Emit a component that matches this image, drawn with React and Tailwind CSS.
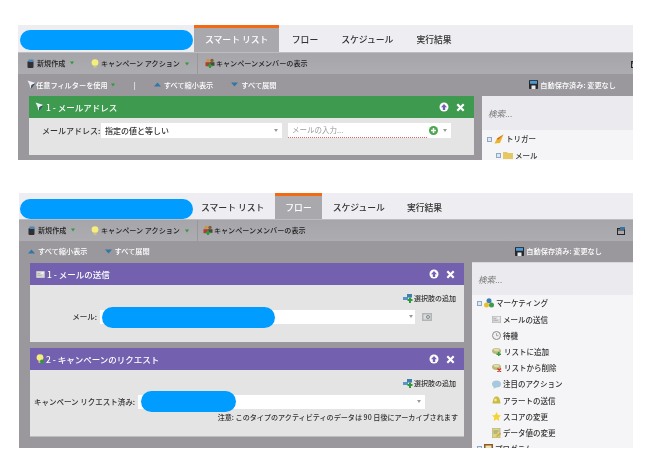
import React from 'react';

const font = { fontFamily: '"Noto Sans CJK JP", "Liberation Sans", sans-serif' };

// Small drawn icons
const NewIcon = () => (
  <svg width="7" height="9" viewBox="0 0 7 9" className="shrink-0">
    <rect x="0.5" y="2" width="6" height="7" rx="1" fill="#2f3033" />
    <rect x="1.5" y="0.5" width="5" height="2.5" fill="#4a86b8" />
  </svg>
);

const BulbIcon = ({ plus }) => (
  <svg width="8" height="10" viewBox="0 0 8 10" className="shrink-0">
    <circle cx="4" cy="3.6" r="3.4" fill="#f6ee7a" />
    <rect x="2.5" y="6.6" width="3" height="2.4" fill="#c4c08c" />
    {plus && <circle cx="6" cy="7.6" r="2" fill="#2e9a3c" />}
  </svg>
);

const MembersIcon = () => (
  <svg width="10" height="10" viewBox="0 0 10 10" className="shrink-0">
    <circle cx="3" cy="2.4" r="1.7" fill="#c9973c" />
    <circle cx="7" cy="2.4" r="1.7" fill="#8a5a2a" />
    <rect x="0.5" y="4.2" width="4.5" height="4" fill="#b8392e" />
    <rect x="5" y="4.2" width="4.5" height="3.6" fill="#4b4a3a" />
    <path d="M4 5.5h2v1.5h1.5v1.5H6V10H4V8.500H2.500V7H4z" fill="#2e9a3c" />
  </svg>
);

const FilterIcon = () => (
  <svg width="9" height="10" viewBox="0 0 9 10" className="shrink-0">
    <path d="M0.500 0.500 L8.500 3 L4.500 5 L3.500 9.500 L2.600 4.800 Z" fill="#f0f0f4" />
    <path d="M3.500 9.500 L4.500 5 L8.500 3 Z" fill="#33506b" />
  </svg>
);

const TriUp = () => (
  <svg width="7" height="5" viewBox="0 0 7 5" className="shrink-0">
    <path d="M3.500 0.500 L7 4.500 H0 Z" fill="#2f77a8" />
  </svg>
);

const TriDown = () => (
  <svg width="7" height="5" viewBox="0 0 7 5" className="shrink-0">
    <path d="M0 0.500 H7 L3.500 4.500 Z" fill="#2f77a8" />
  </svg>
);

const GreenArrow = () => (
  <svg width="4" height="4" viewBox="0 0 4 4" className="shrink-0">
    <path d="M0 0.500 H4 L2 3.500 Z" fill="#2e9a3c" />
  </svg>
);

const SelectArrow = () => (
  <svg width="4" height="3" viewBox="0 0 4 3" className="shrink-0">
    <path d="M0 0 H4 L2 3 Z" fill="#9a9a9a" />
  </svg>
);

const SaveIcon = () => (
  <svg width="9" height="9" viewBox="0 0 9 9" className="shrink-0">
    <rect width="9" height="9" rx="0.8" fill="#26282c" />
    <rect x="1" y="0.800" width="7" height="3" fill="#4d9ad0" />
    <rect x="2.500" y="5.500" width="4" height="3.500" fill="#e8e8e8" />
  </svg>
);

const PrintIcon = () => (
  <svg width="8" height="8" viewBox="0 0 8 8" className="shrink-0">
    <rect x="0.500" y="1.500" width="7" height="6" fill="none" stroke="#26282c" />
    <rect x="0" y="2.500" width="8" height="1" fill="#26282c" />
    <rect x="3" y="0" width="5" height="2.500" fill="#2f77a8" />
  </svg>
);

const UpCircle = () => (
  <svg width="10" height="10" viewBox="0 0 10 10" className="shrink-0">
    <circle cx="5" cy="5" r="4.500" fill="#fff" />
    <path d="M5 2 L8 5.200 H6.200 V8 H3.800 V5.200 H2 Z" fill="currentColor" />
  </svg>
);

const CloseX = () => (
  <svg width="9" height="9" viewBox="0 0 9 9" className="shrink-0">
    <path d="M1.300 1.300 L7.700 7.700 M7.700 1.300 L1.300 7.700" stroke="#fff" strokeWidth="2.200" />
  </svg>
);

const PlusCircle = () => (
  <svg width="9" height="9" viewBox="0 0 9 9" className="shrink-0">
    <circle cx="4.500" cy="4.500" r="4.500" fill="#4aa84f" />
    <path d="M4.500 2 V7 M2 4.500 H7" stroke="#fff" strokeWidth="1.500" />
  </svg>
);

const AddChoiceIcon = () => (
  <svg width="10" height="9" viewBox="0 0 10 9" className="shrink-0">
    <rect x="0" y="3" width="5" height="3" fill="#5a94c4" />
    <rect x="4" y="0" width="5" height="3.500" fill="#3f7fb3" />
    <path d="M6 3.500h2v1.500h1.500v2H8V9H6V7H4.500V5H6z" fill="#2e9a3c" />
  </svg>
);

const MailIcon = () => (
  <svg width="9" height="7" viewBox="0 0 10 8" className="shrink-0">
    <rect width="10" height="8" fill="#d8d8d8" stroke="#9a9a9a" strokeWidth="0.600" />
    <rect x="6" y="1.200" width="2.600" height="2" fill="#f4f4f4" />
    <path d="M1.500 3h3M1.500 5h5" stroke="#9a9a9a" strokeWidth="0.700" />
  </svg>
);

const PickIcon = () => (
  <svg width="10" height="8" viewBox="0 0 10 8" className="shrink-0">
    <rect width="10" height="8" fill="#b4b4b6" />
    <rect x="1.500" y="1.500" width="7" height="5" fill="#dcdcde" />
    <circle cx="6" cy="4" r="1.500" fill="none" stroke="#6f8f86" />
  </svg>
);

const ClockIcon = () => (
  <svg width="9" height="9" viewBox="0 0 9 9" className="shrink-0">
    <circle cx="4.500" cy="4.500" r="4" fill="#f0f0f0" stroke="#8a8a8a" />
    <path d="M4.500 2.200 V4.700 H6.500" stroke="#8a8a8a" strokeWidth="0.700" fill="none" />
  </svg>
);

const ListIcon = ({ remove }) => (
  <svg width="10" height="9" viewBox="0 0 10 9" className="shrink-0">
    <ellipse cx="4.500" cy="4" rx="4.500" ry="3" fill="#b9b878" />
    <ellipse cx="4.500" cy="3" rx="3" ry="1.400" fill="#dedcae" />
    {remove
      ? <path d="M5.500 5.500 L9 9 M9 5.500 L5.500 9" stroke="#d32f20" strokeWidth="1.300" />
      : <path d="M6 5h1.500v1.500H9V8H7.500v1H6V8H4.500V6.500H6z" fill="#2e9a3c" />}
  </svg>
);

const BubbleIcon = () => (
  <svg width="9" height="9" viewBox="0 0 9 9" className="shrink-0">
    <ellipse cx="4.500" cy="4" rx="4.500" ry="3.500" fill="#a8c8dc" />
    <path d="M2 6.500 L1.500 9 L4.500 7 Z" fill="#a8c8dc" />
  </svg>
);

const BellIcon = () => (
  <svg width="9" height="9" viewBox="0 0 9 9" className="shrink-0">
    <path d="M4.500 0.500 C7 0.500 8 3 8.500 7.500 H0.500 C1 3 2 0.500 4.500 0.500Z" fill="#c9bb3f" />
    <circle cx="3.500" cy="4" r="1.400" fill="#f0e89a" />
  </svg>
);

const StarIcon = () => (
  <svg width="9" height="9" viewBox="0 0 9 9" className="shrink-0">
    <path d="M4.500 0 L5.900 3 L9 3.400 L6.700 5.500 L7.300 9 L4.500 7.200 L1.700 9 L2.300 5.500 L0 3.400 L3.100 3 Z" fill="#f6d32e" />
  </svg>
);

const DataIcon = () => (
  <svg width="9" height="10" viewBox="0 0 9 10" className="shrink-0">
    <rect width="8" height="10" fill="#dcd48a" stroke="#9a9a7a" strokeWidth="0.600" />
    <path d="M1.500 3h5M1.500 5h4" stroke="#7a8a5a" strokeWidth="0.800" />
    <path d="M4 8 L8.500 4.500 L9 6 L5 9 Z" fill="#d8a63a" />
  </svg>
);

const TreeBox = () => (
  <span className="w-[5px] h-[5px] shrink-0 border border-[#8fa9c4] bg-[#dfe7f0]" />
);

const MarketingIcon = () => (
  <svg width="10" height="10" viewBox="0 0 10 10" className="shrink-0">
    <circle cx="5" cy="2.800" r="2.500" fill="#3f7fb3" />
    <circle cx="2.500" cy="7" r="2.500" fill="#e8c02e" />
    <circle cx="7.500" cy="7" r="2.500" fill="#3d9a4f" />
  </svg>
);

const TriggerIcon = () => (
  <svg width="10" height="10" viewBox="0 0 10 10" className="shrink-0">
    <path d="M9.500 0.500 L6 9 L0.500 9.500 L3 4.500 Z" fill="#e8b52e" />
    <path d="M9.500 0.500 L3 4.500 L4 6 Z" fill="#d2691e" />
  </svg>
);

const FolderIcon = () => (
  <svg width="10" height="8" viewBox="0 0 10 8" className="shrink-0">
    <path d="M0 1 H4 L5 2 H10 V8 H0 Z" fill="#e5c763" />
  </svg>
);

const ProgramIcon = () => (
  <svg width="9" height="9" viewBox="0 0 9 9" className="shrink-0">
    <rect width="9" height="9" fill="#8a5a2a" />
    <rect x="1.500" y="1.500" width="6" height="3" fill="#f0e0b0" />
  </svg>
);

// Tab bar with the redaction pill on the left
const Tabs = ({ active, flow }) => {
  const tabs = ['スマート リスト', 'フロー', 'スケジュール', '実行結果'];
  return (
    <div className={`flex bg-[#eeeef2] text-[8.8px] font-medium text-[#333] ${flow ? 'h-[26px]' : 'h-[27px]'}`}>
      <div className={`w-[173px] h-[20px] rounded-full bg-[#009cff] ${flow ? 'ml-[1px] mt-[6px]' : 'ml-[2px] mt-[5px]'}`} />
      {tabs.map((tab) => (
        <div
          key={tab}
          className={tab === active
            ? `flex items-center border-t-[3px] border-[#f26a12] bg-[#a9a8ad] text-white ${flow ? 'px-[10px]' : 'ml-[1px] mr-[1px] px-[11px]'}`
            : `flex items-center pt-[3px] ${flow ? 'px-[11px] [&:nth-child(2)]:pl-[8px]' : 'px-[11.5px]'}`}
        >
          {tab}
        </div>
      ))}
    </div>
  );
};

const Toolbar = ({ compact }) => (
  <div className="flex items-center h-[22px] bg-gradient-to-b from-[#a6a5aa] to-[#adacb1] border-t border-[#bdbdc0] text-[7.1px] font-medium text-[#222] overflow-hidden">
    <div className="flex items-center gap-[3px] ml-[9px] w-[62px]">
      <NewIcon />
      <span>新規作成</span>
      <span className="ml-[2px]"><GreenArrow /></span>
    </div>
    <div className={`flex items-center gap-[2px] border-r border-[#98979c] h-full pr-[8px] ${compact ? 'ml-[1px]' : 'ml-[2px]'}`}>
      <BulbIcon />
      <span>キャンペーン アクション</span>
      <span className="ml-[3px]"><GreenArrow /></span>
    </div>
    <div className={`flex items-center ${compact ? 'ml-[5px]' : 'ml-[7px]'}`}>
      <MembersIcon />
      <span className="ml-[1px]">キャンペーンメンバーの表示</span>
    </div>
    <div className={`ml-auto ${compact ? 'mr-[8px]' : '-mr-[6px]'}`}>
      <PrintIcon />
    </div>
  </div>
);

const SubBar = ({ flow, children }) => (
  <div className={`flex items-center bg-[#9a989d] text-[7.2px] font-medium text-white ${flow ? 'h-[21px]' : 'h-[22px]'}`}>
    {children}
  </div>
);

const CardHeader = ({ color, icon, title }) => (
  <div className={`flex items-center h-[22px] pl-[6px] pr-[9px] ${color}`}>
    {icon}
    <span className="ml-[2px] text-[8.5px] font-medium text-white">{title}</span>
    <span className="ml-auto mr-[7px] text-[#7361b0]"><UpCircle /></span>
    <CloseX />
  </div>
);

const TreeRow = ({ icon, label, indent }) => (
  <div className={`flex items-center gap-[2px] h-[16.2px] text-[7.5px] font-medium text-[#333] ${indent}`}>
    {icon}
    <span>{label}</span>
  </div>
);

const AddChoice = () => (
  <div className="flex items-center justify-end pr-[8px] text-[7px] font-medium text-[#333]">
    <AddChoiceIcon />
    <span className="ml-[1px]">選択肢の追加</span>
  </div>
);

const marketingItems = [
  { icon: <MailIcon />, label: 'メールの送信' },
  { icon: <ClockIcon />, label: '待機' },
  { icon: <ListIcon />, label: 'リストに追加' },
  { icon: <ListIcon remove />, label: 'リストから削除' },
  { icon: <BubbleIcon />, label: '注目のアクション' },
  { icon: <BellIcon />, label: 'アラートの送信' },
  { icon: <StarIcon />, label: 'スコアの変更' },
  { icon: <DataIcon />, label: 'データ値の変更' },
];

const SmartListScreen = () => (
  <section className="ml-[18px] w-[615px] h-[135px] overflow-hidden bg-[#9a989d]">
    <Tabs active="スマート リスト" />
    <Toolbar />
    <SubBar>
      <div className="flex items-center ml-[9px]">
        <FilterIcon />
        <span>任意フィルターを使用</span>
        <span className="ml-[3px]"><GreenArrow /></span>
      </div>
      <span className="ml-[19px]">|</span>
      <div className="flex items-center gap-[3px] ml-[18px]"><TriUp /><span>すべて縮小表示</span></div>
      <div className="flex items-center gap-[3px] ml-[18px]"><TriDown /><span>すべて展開</span></div>
      <div className="flex items-center gap-[2px] ml-auto mr-[17px]"><SaveIcon /><span>自動保存済み: 変更なし</span></div>
    </SubBar>
    <div className="flex pl-[11px]">
      <div className="w-[445px]">
        <CardHeader color="bg-[#3d9a4f]" icon={<FilterIcon />} title="1 - メールアドレス" />
        <div className="flex items-start h-[37px] pt-[5px] bg-[#e4e4e5] text-[8px] font-medium text-[#333]">
          <span className="ml-[13px] w-[59px] leading-[15px]">メールアドレス:</span>
          <div className="flex items-center justify-between w-[181px] h-[15px] px-[4px] bg-white">
            <span>指定の値と等しい</span>
            <SelectArrow />
          </div>
          <div className="flex items-center ml-[6px] w-[163px] h-[15px] bg-white text-[7.5px] font-normal text-[#999]">
            <span className="w-[139px] h-full pl-[4px] leading-[14px] border-b border-dotted border-[#e8605a]">メールの入力...</span>
            <span className="ml-[2px]"><PlusCircle /></span>
            <span className="ml-[5px]"><SelectArrow /></span>
          </div>
        </div>
      </div>
      <div className="ml-[8px] flex-1 bg-[#f5f5f7]">
        <div className="flex items-center h-[34px] pl-[6px] bg-[#ebebef] text-[8.5px] italic text-[#777]">検索...</div>
        <div className="pt-[1px] pl-[5px]">
          <TreeRow icon={<><TreeBox /><TriggerIcon /></>} label="トリガー" />
          <TreeRow icon={<><TreeBox /><FolderIcon /></>} label="メール" indent="ml-[9px]" />
        </div>
      </div>
    </div>
  </section>
);

const FlowScreen = () => (
  <section className="mt-[33px] ml-[19px] w-[614px] h-[255px] overflow-hidden bg-[#9a989d]">
    <Tabs active="フロー" flow />
    <Toolbar compact />
    <SubBar flow>
      <div className="flex items-center gap-[3px] ml-[9px]"><TriUp /><span>すべて縮小表示</span></div>
      <div className="flex items-center gap-[3px] ml-[17px]"><TriDown /><span>すべて展開</span></div>
      <div className="flex items-center gap-[2px] ml-auto mr-[31px]"><SaveIcon /><span>自動保存済み: 変更なし</span></div>
    </SubBar>
    <div className="flex pl-[11px]">
      <div className="w-[434px] pt-[1px]">
        <CardHeader color="bg-[#7361b0]" icon={<MailIcon />} title="1 - メールの送信" />
        <div className="h-[57px] pt-[8px] bg-[#e4e4e5] text-[8px] font-medium text-[#333]">
          <AddChoice />
          <div className="flex items-center mt-[6px]">
            <span className="w-[67px] text-right text-[7.5px]">メール:</span>
            <div className="relative flex items-center justify-end ml-[3px] w-[315px] h-[14px] pr-[2px] bg-white">
              <div className="absolute left-[2px] -top-[3px] w-[173px] h-[21px] rounded-full bg-[#009cff]" />
              <SelectArrow />
            </div>
            <span className="ml-[7px]"><PickIcon /></span>
          </div>
        </div>
        <div className="h-[6px]" />
        <CardHeader color="bg-[#7361b0]" icon={<BulbIcon plus />} title="2 - キャンペーンのリクエスト" />
        <div className="h-[67px] pt-[8px] bg-[#e4e4e5] border-b border-[#bdbdc0] text-[8px] font-medium text-[#333]">
          <AddChoice />
          <div className="flex items-center mt-[6px]">
            <span className="w-[105px] text-right text-[7.5px]">キャンペーン リクエスト済み:</span>
            <div className="relative flex items-center justify-end ml-[3px] w-[287px] h-[14px] pr-[4px] bg-white">
              <div className="absolute left-[3px] -top-[4px] w-[95px] h-[21px] rounded-full bg-[#009cff]" />
              <SelectArrow />
            </div>
          </div>
          <p className="mt-[3px] pr-[6px] text-right text-[7.1px]">注意: このタイプのアクティビティのデータは 90 日後にアーカイブされます</p>
        </div>
      </div>
      <div className="ml-[8px] flex-1 h-[186px] bg-[#f5f5f7] border-t border-[#d8d8dc]">
        <div className="flex items-center h-[32px] pl-[6px] bg-[#ebebef] text-[8.5px] italic text-[#777]">検索...</div>
        <div className="pl-[5px]">
          <TreeRow icon={<><TreeBox /><MarketingIcon /></>} label="マーケティング" />
          {marketingItems.map((item) => (
            <TreeRow key={item.label} icon={item.icon} label={item.label} indent="ml-[15px]" />
          ))}
          <TreeRow icon={<><TreeBox /><ProgramIcon /></>} label="プログラム" />
        </div>
      </div>
    </div>
  </section>
);

export default function App() {
  return (
    <div className="w-[656px] h-[476px] overflow-hidden bg-white pt-[25px] blur-[0.35px]" style={font}>
      <SmartListScreen />
      <FlowScreen />
    </div>
  );
}
